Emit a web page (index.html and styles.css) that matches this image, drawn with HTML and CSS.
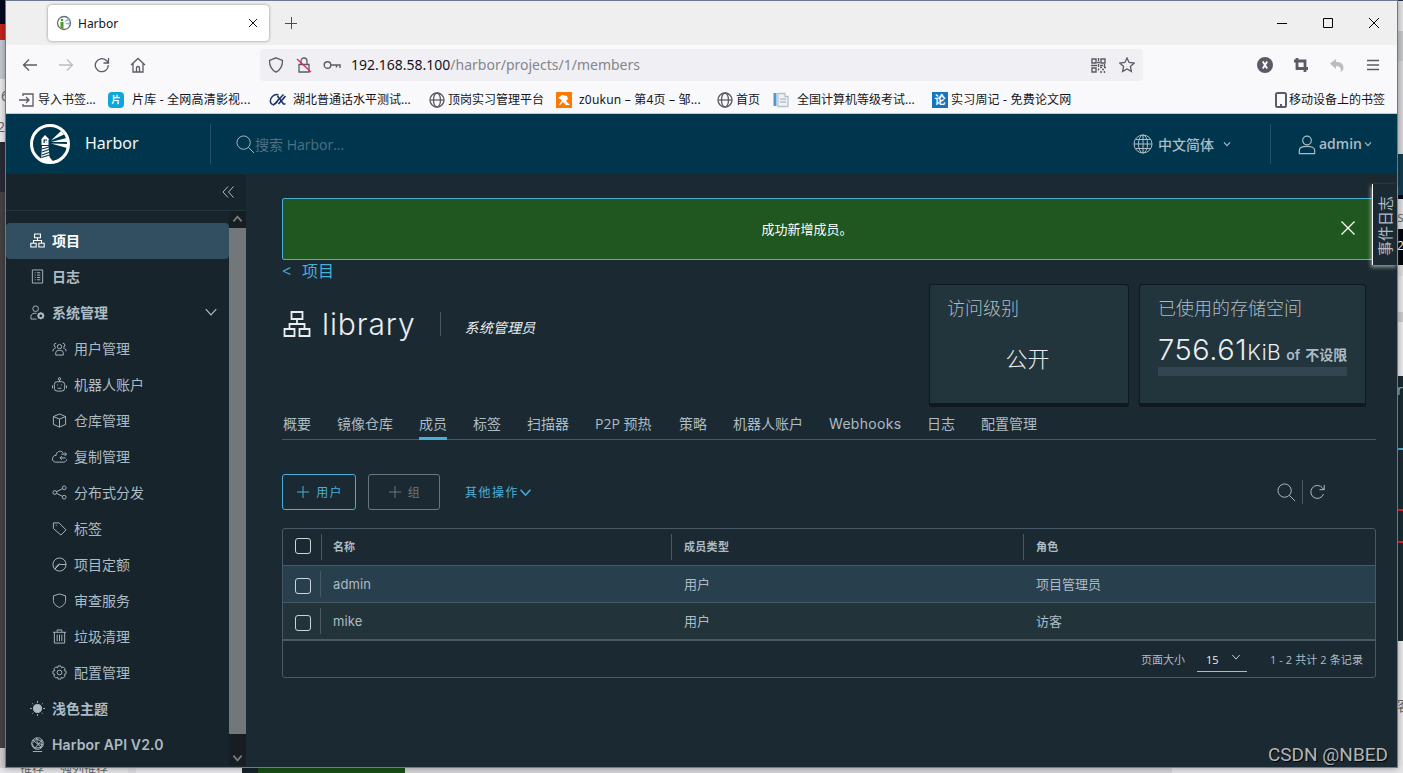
FILE: index.html
```html
<!DOCTYPE html>
<html lang="zh-CN">
<head>
    <meta charset="UTF-8">
    <meta name="viewport" content="width=device-width, initial-scale=1.0">
    <title>Harbor</title>
    <link rel="stylesheet" href="styles.css">
</head>
<body>
    <!-- shared icons -->
    <svg class="defs" aria-hidden="true">
        <symbol id="i-project" viewBox="0 0 28 28"><path d="M8.500 2h11v7h-11zM1.500 19h10v7h-10zM16.500 19h10v7h-10zM14 9v5M6.500 19v-5h15v5"/></symbol>
        <symbol id="i-angle" viewBox="0 0 12 12"><path d="M1.500 3.500L6 8.500l4.500-5"/></symbol>
        <symbol id="i-search" viewBox="0 0 20 20"><circle cx="8" cy="8" r="7"/><path d="M13 13l6 6"/></symbol>
        <symbol id="i-globe" viewBox="0 0 20 20"><circle cx="10" cy="10" r="9"/><ellipse cx="10" cy="10" rx="4.500" ry="9"/><path d="M10 1v18M1 10h18M2.500 5.500h15M2.500 14.500h15"/></symbol>
        <symbol id="i-web" viewBox="0 0 16 16"><circle cx="8" cy="8" r="7"/><ellipse cx="8" cy="8" rx="3.500" ry="7"/><path d="M1 8h14"/></symbol>
    </svg>

    <div class="backdrop">
        <div class="back-left"><span class="bl-six">6</span><span class="bl-two">2</span></div>
        <div class="back-right"><span class="br-s">s</span><span class="br-two">2</span><span class="br-r">r</span><span class="br-guest">客</span></div>
        <div class="back-bottom"><span class="bb-text">推荐</span><span class="bb-text">强列推荐</span></div>
    </div>

    <div class="window">
        <div class="tab-bar">
            <div class="tab">
                <svg class="tab-icon" viewBox="0 0 16 16"><circle cx="8" cy="8" r="6.500" fill="#fff" stroke="#667076" stroke-width="1.300"/><g stroke="none"><path d="M8 7l4-4 1.500 2.500zM8.500 8.500L14 7v3z" fill="#8fbddd"/><path d="M4.500 13V7h3v7z" fill="#4d9a2b"/><circle cx="6" cy="5" r="1.300" fill="#4d9a2b"/></g></svg>
                <span class="tab-title">Harbor</span>
                <svg class="tab-close" viewBox="0 0 8 8"><path d="M0 0l8 8M8 0L0 8"/></svg>
            </div>
            <svg class="new-tab" viewBox="0 0 12 12"><path d="M6 0v12M0 6h12"/></svg>
            <div class="win-buttons">
                <svg viewBox="0 0 10 10"><path d="M0 5.500h10"/></svg>
                <svg viewBox="0 0 10 10"><path d="M.5.5h9v9h-9z"/></svg>
                <svg viewBox="0 0 10 10"><path d="M0 0l10 10M10 0L0 10"/></svg>
            </div>
        </div>

        <div class="toolbar">
            <div class="nav-buttons">
                <svg viewBox="0 0 16 16"><path d="M15 8H1.500M7 2.500L1.500 8 7 13.500"/></svg>
                <svg class="off" viewBox="0 0 16 16"><path d="M1 8h13.500M9 2.500L14.500 8 9 13.500"/></svg>
                <svg viewBox="0 0 16 16"><path d="M14.300 8a6.500 6.500 0 1 1-2-4.500L14 5M14.500 1v5h-5"/></svg>
                <svg viewBox="0 0 16 16"><path d="M1 8l7-6.500L15 8M3 6.500V15h10V6.500M6.500 15v-4a1.500 1.500 0 0 1 3 0v4"/></svg>
            </div>
            <div class="url-bar">
                <svg class="u-shield" viewBox="0 0 16 16"><path d="M8 .8l6.500 2.700c0 6-2 9.500-6.500 11.700C3.500 13 1.500 9.500 1.500 3.500z"/></svg>
                <svg class="u-lock" viewBox="0 0 16 16"><path d="M3 7.500h10V15H3zM5 7.500V4a3 3 0 0 1 6 0v3.500"/><path class="strike" d="M1 2l14 13"/></svg>
                <svg class="u-key" viewBox="0 0 18 10"><circle cx="4.500" cy="5" r="3.300"/><path d="M8 5h9v3M13.500 5v2.500"/></svg>
                <span class="url"><b>192.168.58.100</b>/harbor/projects/1/members</span>
                <svg class="u-qr" viewBox="0 0 15 15"><path d="M1 1h4v4H1zM10 1h4v4h-4zM1 10h4v4H1zM7.500 0v3M6 4.500h3M7.500 6v3M0 7.500h6M9 7.500h3M13.500 6v3M7.500 10.500v2M9 9.500h2M11 11.500h2M9 14h2M13.500 13v2M13 9.500h2"/></svg>
                <svg class="u-star" viewBox="0 0 16 16"><path d="M8 1l2.100 4.500 5 .6-3.700 3.400 1 4.900L8 12l-4.400 2.400 1-4.900L.9 6.100l5-.6z"/></svg>
            </div>
            <div class="tool-buttons">
                <svg viewBox="0 0 16 16"><circle cx="8" cy="8" r="8" fill="#5b5b66" stroke="none"/><path class="thin-white" d="M5.800 4.500l4.400 7M10.200 4.500l-4.400 7"/></svg>
                <svg class="crop" viewBox="0 0 16 16"><path d="M1 4h11v11M4 1v10.500h11"/></svg>
                <svg viewBox="0 0 16 16"><path d="M1 6.500L7 2v3c5 0 7.500 2 7.500 5.500 0 2-1 3.500-3 4.500 1-3.500 0-5.800-4.500-6v3z" fill="#bcbcbf" stroke="none"/></svg>
                <svg viewBox="0 0 16 16"><path d="M2 3.500h12M2 8h12M2 12.500h12"/></svg>
            </div>
        </div>

        <div class="bookmarks">
            <a><svg viewBox="0 0 16 16"><path d="M4 4V2h10v12H4v-2M0 8h10M7 5l3 3-3 3"/></svg>导入书签...</a>
            <a class="wide"><i class="fav fav-cyan">片</i>片库 - 全网高清影视...</a>
            <a><svg class="fav-cx" viewBox="0 0 16 16"><path d="M9 3C5 1 0 6 1 10s6 3 8-3M3.500 13.500L14 2.500"/><path d="M8 4l6 8h2M16 4l-7 8" stroke-width="1.600"/></svg>湖北普通话水平测试...</a>
            <a><svg viewBox="0 0 16 16"><use href="#i-web"/></svg>顶岗实习管理平台</a>
            <a class="wide"><svg class="fav-z" viewBox="0 0 16 16"><path d="M0 0h16v16H0z" fill="#ff7800"/><path d="M2 6l4-3 5 1 1 3-2 2 4 4h-4l-3-3-3 3H3l3-5-2-1z" fill="#fff"/></svg>z0ukun – 第4页 – 邹...</a>
            <a><svg viewBox="0 0 16 16"><use href="#i-web"/></svg>首页</a>
            <a><svg class="fav-doc" viewBox="0 0 16 16"><path d="M.5 1h3v13h-3z" fill="#4e9bd0"/><path d="M5 1.500h7v3h3v10H5zM7 7h6M7 10h6" fill="#eef2f5" stroke="#b5c1ca"/></svg>全国计算机等级考试...</a>
            <a class="wide"><i class="fav fav-blue">论</i>实习周记 - 免费论文网</a>
            <a class="mobile"><svg viewBox="0 0 12 16"><rect x="1" y="1" width="10" height="14" rx="1.500"/><path d="M5 13h2"/></svg>移动设备上的书签</a>
        </div>

        <div class="app-header">
            <svg class="logo" viewBox="0 0 40 40">
                <circle cx="20" cy="20" r="18.500" fill="none" stroke="#fff" stroke-width="3"/>
                <path d="M11 15.500L15 11l4.500 4.500h-1V21h-7v-5.500z" fill="#fff"/><path d="M13.500 15.500h3.500V19h-3.500z" fill="#00364d"/><path d="M14.800 16.500h2V19h-2z" fill="#fff"/>
                <path d="M12 22h6.500l1 11 4 5H11z" fill="#fff"/><path d="M12 25l7-2M12 28l7-2.500M12 31l7-2.500M11.500 33.500l8-2.500" stroke="#00364d" stroke-width="1.200"/>
                <path d="M21 16.500L31 7l3 3.500zM21 18l15.500-4 1 4zM21 19.500l16.500.5-.5 4z" fill="#fff"/>
            </svg>
            <span class="brand">Harbor</span>
            <div class="search">
                <svg viewBox="0 0 20 20"><use href="#i-search"/></svg>
                <span>搜索 Harbor...</span>
            </div>
            <div class="lang">
                <svg class="globe" viewBox="0 0 20 20"><use href="#i-globe"/></svg>
                <span>中文简体</span>
                <svg class="angle" viewBox="0 0 12 12"><use href="#i-angle"/></svg>
            </div>
            <div class="user">
                <svg class="person" viewBox="0 0 20 22"><circle cx="10" cy="6" r="4.800"/><path d="M1.500 20.500v-4c0-2.500 4-4 8.500-4s8.500 1.500 8.500 4v4z"/></svg>
                <span>admin</span>
                <svg class="angle" viewBox="0 0 12 12"><use href="#i-angle"/></svg>
            </div>
        </div>

        <div class="main">
            <div class="sidebar">
                <div class="collapse"><svg viewBox="0 0 12 12"><path d="M6 .5L1 6l5 5.500M11.500.5l-5 5.500 5 5.500"/></svg></div>
                <div class="side-scroll">
                    <ul class="menu">
                        <li class="active"><svg viewBox="0 0 28 28" class="w2"><use href="#i-project"/></svg>项目</li>
                        <li class="top"><svg viewBox="0 0 16 16"><path d="M2.500 1h11v14h-11zM5 4h1M7.500 4H11M5 6.500h1M7.500 6.500H11M5 9h1M7.500 9H11M5 11.500h1M7.500 11.500H11"/></svg>日志</li>
                        <li class="top"><svg viewBox="0 0 16 16"><circle cx="6" cy="4" r="3"/><path d="M7 15H1v-3c0-2 2-3.500 6-3.200"/><circle cx="11.500" cy="11.500" r="2.500" stroke-width="2"/><path d="M11.500 7.500v8M7.500 11.500h8M8.700 8.700l5.600 5.600M14.300 8.700l-5.600 5.600" stroke-dasharray="1.500 5"/></svg>系统管理<svg class="chevron" viewBox="0 0 12 12"><use href="#i-angle"/></svg></li>
                        <li class="sub"><svg viewBox="0 0 16 16"><circle cx="8" cy="6" r="2.300"/><path d="M4 15v-2.500C4 10.500 6 10 8 10s4 .5 4 2.500V15zM4.500 2.500a2 2 0 1 0-.5 4M1 11c0-2 1-3.500 3-3.500M11.500 2.500a2 2 0 1 1 .5 4M15 11c0-2-1-3.500-3-3.500"/></svg>用户管理</li>
                        <li class="sub"><svg viewBox="0 0 16 16"><rect x="2.500" y="5" width="11" height="10" rx="3"/><circle cx="8" cy="2" r="1.300"/><path d="M8 3v2M.5 9v3M15.500 9v3M5.500 8.500h1M9.500 8.500h1M6 12h4"/></svg>机器人账户</li>
                        <li class="sub"><svg viewBox="0 0 16 16"><path d="M8 1l6.500 2.800v8.400L8 15l-6.500-2.800V3.800zM1.500 3.800L8 6.500l6.500-2.700M8 6.500V15"/></svg>仓库管理</li>
                        <li class="sub"><svg viewBox="0 0 16 16"><path d="M12 4.500C10.500 1.500 6 1.500 4.500 5.500c0 0-.2.800 0 1.300C2 6.500.5 8.500.5 10.500S2 14 3.500 14H12c2 0 3.500-1 3.500-3M10 5.500h5.500M13.500 3.500l2 2-2 2M14.500 9.500H8.500M10.500 7.500l-2 2 2 2"/></svg>复制管理</li>
                        <li class="sub"><svg viewBox="0 0 16 16"><circle cx="3" cy="8" r="2"/><circle cx="13" cy="3" r="2"/><circle cx="13" cy="13" r="2"/><path d="M5 7l6-3M5 9l6 3"/></svg>分布式分发</li>
                        <li class="sub"><svg viewBox="0 0 16 16"><path d="M1.500 2h6l7.500 7.500-5.500 5.500L1.500 8zM4 4.500h1"/></svg>标签</li>
                        <li class="sub"><svg viewBox="0 0 16 16"><circle cx="8" cy="8" r="7"/><path d="M3 13l5-5h7M3.500 11L8 7"/></svg>项目定额</li>
                        <li class="sub"><svg viewBox="0 0 16 16"><path d="M8 1l6.500 2v5c0 3.500-3 6-6.500 7.500C4.500 14 1.500 11.500 1.500 8V3z"/></svg>审查服务</li>
                        <li class="sub"><svg viewBox="0 0 16 16"><path d="M1 3.500h14M5.500 3V1h5v2M2.500 3.500V15h11V3.500M5.500 6v7M8 6v7M10.500 6v7"/></svg>垃圾清理</li>
                        <li class="sub"><svg viewBox="0 0 16 16"><circle cx="8" cy="8" r="2.500"/><path d="M6.500 1h3l.5 2 2-.9 2 2L13 6l2 .5v3l-2 .5.900 2-2 2-2-.9-.4 1.900h-3L6 13l-2 .9-2-2L3 10l-2-.5v-3L3 6l-.9-2 2-2L6 3z"/></svg>配置管理</li>
                        <li class="top"><svg viewBox="0 0 16 16"><circle cx="8" cy="8" r="4.300" fill="#adbbc4"/><path d="M8 0v2M8 14v2M0 8h2M14 8h2M2.500 2.500l1 1M12.500 12.500l1 1M13.500 2.500l-1 1M2.500 13.500l1-1"/></svg>浅色主题</li>
                        <li class="top api"><svg viewBox="0 0 16 16"><circle cx="8" cy="7" r="6.200"/><path d="M3 15.500h10M3 3l9 8M13 3L5 12M2 7l5-5 6 3-1 6-7 1zM7 1l1 6 6 1"/></svg>Harbor API V2.0</li>
                    </ul>
                    <div class="scrollbar">
                        <svg viewBox="0 0 12 12" class="up"><use href="#i-angle"/></svg>
                        <div class="thumb"></div>
                        <svg viewBox="0 0 12 12"><use href="#i-angle"/></svg>
                    </div>
                </div>
            </div>

            <div class="content">
                <div class="alert">
                    <span>成功新增成员。</span>
                    <svg viewBox="0 0 14 14"><path d="M.5.5l13 13M13.500.5l-13 13"/></svg>
                </div>
                <div class="event-tab"><span>事件日志</span></div>

                <div class="back-link"><span>&lt;</span>项目</div>
                <div class="summary">
                    <div class="title">
                        <svg viewBox="0 0 28 28"><use href="#i-project"/></svg>
                        <h1>library</h1>
                        <em>系统管理员</em>
                    </div>
                    <div class="card access">
                        <h2>访问级别</h2>
                        <p>公开</p>
                    </div>
                    <div class="card storage">
                        <h2>已使用的存储空间</h2>
                        <p><b>756.61</b><span class="unit">KiB</span><span class="of">of</span><strong>不设限</strong></p>
                        <div class="quota"></div>
                    </div>
                </div>

                <div class="tabs">
                    <a>概要</a><a>镜像仓库</a><a class="current">成员</a><a>标签</a><a>扫描器</a><a class="p2p">P2P 预热</a><a>策略</a><a>机器人账户</a><a class="hooks">Webhooks</a><a>日志</a><a>配置管理</a>
                </div>

                <div class="actions">
                    <button class="btn"><svg viewBox="0 0 12 12"><path d="M6 0v12M0 6h12"/></svg>用户</button>
                    <button class="btn disabled"><svg viewBox="0 0 12 12"><path d="M6 0v12M0 6h12"/></svg>组</button>
                    <span class="more">其他操作<svg viewBox="0 0 12 12"><use href="#i-angle"/></svg></span>
                    <div class="tools">
                        <svg viewBox="0 0 20 20"><use href="#i-search"/></svg>
                        <svg class="refresh" viewBox="0 0 16 16"><path d="M14 10A6.500 6.500 0 1 1 13 4l1.500 1.500M14.700 1v4.700H10"/></svg>
                    </div>
                </div>

                <div class="grid">
                    <div class="row head"><i><s></s></i><span>名称</span><span>成员类型</span><span>角色</span></div>
                    <div class="row hover"><i><s></s></i><span class="latin">admin</span><span>用户</span><span>项目管理员</span></div>
                    <div class="row"><i><s></s></i><span class="latin">mike</span><span>用户</span><span>访客</span></div>
                    <div class="foot">
                        <span>页面大小</span>
                        <span class="size">15<svg viewBox="0 0 12 12"><use href="#i-angle"/></svg></span>
                        <span class="count">1 - 2 共计 2 条记录</span>
                    </div>
                </div>
            </div>
        </div>
    </div>
    <div class="watermark">CSDN @NBED</div>
</body>
</html>
```

FILE: styles.css
```css
* {
    box-sizing: border-box;
}
body {
    margin: 0;
    width: 1403px;
    height: 773px;
    position: relative;
    overflow: hidden;
    font-family: "Open Sans", "Noto Sans CJK SC", sans-serif;
    font-size: 14px;
    color: #adbbc4;
}
svg {
    display: block;
    flex: none;
    fill: none;
    stroke: currentColor;
}
ul, h1, h2, p {
    margin: 0;
    padding: 0;
}
.defs {
    position: absolute;
    width: 0;
    height: 0;
}

/* what is behind the window */
.backdrop {
    position: absolute;
    inset: 0;
    background: #e9e9eb;
    color: #666;
}
.backdrop span {
    position: absolute;
}
.back-left {
    position: absolute;
    left: 0;
    top: 0;
    width: 5px;
    height: 773px;
    overflow: hidden;
    background: linear-gradient(#020a20 0 24px, #c5251f 24px 40px, #c6cad2 40px 79px, #ececef 79px 142px, #292c37 142px 192px, #454244 192px 748px, #cfcfd1 748px 768px, #e9e9eb 768px);
}
.back-left .bl-six {
    top: 86px;
    left: 1px;
}
.back-left .bl-two {
    top: 117px;
    left: -3px;
}
.back-right {
    position: absolute;
    right: 0;
    top: 0;
    width: 6px;
    height: 773px;
    overflow: hidden;
    background: linear-gradient(#2b3040 0 1px, #e5e5e7 1px 31px, #c8c9cc 31px 61px, #d7d7d9 61px 154px, #123c4f 154px 195px, #020712 195px 199px, #dfdfe1 199px 229px, #03060e 229px 265px, #dedede 265px 276px, #e8e8e8 276px 312px, #ccc 312px 322px, #ececee 322px 376px, #1b2a32 376px 448px, #4aaed9 448px 450px, #1b2a32 450px 509px, #e02626 509px 511px, #1b2a32 511px 541px, #e02626 541px 543px, #1b2a32 543px 641px, #e9e9eb 641px);
}
.back-right .br-s {
    top: 207px;
}
.back-right .br-two {
    top: 237px;
    font-size: 12px;
    color: #fff;
}
.back-right .br-r {
    top: 380px;
    color: #adbbc4;
}
.back-right .br-guest {
    top: 695px;
}
.back-bottom {
    position: absolute;
    left: 0;
    bottom: 0;
    width: 1403px;
    height: 5px;
    overflow: hidden;
    display: flex;
    background: linear-gradient(90deg, #e6e6e8 0 128px, #dcdce0 128px 136px, #e9e9eb 136px 242px, #17242b 242px 258px, #174f18 258px 405px, #d5d5d7 405px 1172px, #e6e6e8 1172px);
}
.backdrop .bb-text {
    position: static;
    margin: -8px -4px 0 20px;
    font-size: 12px;
    line-height: 18px;
}

.window {
    position: absolute;
    left: 5px;
    top: 0;
    width: 1393px;
    height: 768px;
    border: 1px solid #6c7a91;
    background: #1b2a32;
    box-shadow: 0 0 7px rgba(0, 0, 0, .35);
    display: flex;
    flex-direction: column;
}

/* browser chrome */
.tab-bar {
    height: 44px;
    background: #efefef;
    display: flex;
    align-items: center;
    color: #15141a;
}
.tab {
    margin-left: 42px;
    width: 221px;
    height: 36px;
    padding: 0 12px 0 8px;
    background: #fff;
    border-radius: 4px;
    box-shadow: 0 0 3px rgba(0, 0, 0, .45);
    display: flex;
    align-items: center;
}
.tab-icon {
    width: 16px;
    height: 16px;
}
.tab-title {
    flex: 1;
    margin-left: 6px;
    font-family: "Noto Sans", sans-serif;
    font-size: 12px;
}
.tab-close {
    width: 8px;
    height: 8px;
    overflow: visible;
}
.new-tab {
    width: 12px;
    height: 12px;
    margin-left: 16px;
    color: #4b4b55;
    shape-rendering: crispEdges;
}
.win-buttons {
    margin-left: auto;
    margin-right: 18px;
    display: flex;
    gap: 36px;
    color: #000;
}
.win-buttons svg {
    width: 10px;
    height: 10px;
}
.toolbar {
    height: 40px;
    background: #f9f9fb;
    display: flex;
    align-items: center;
    color: #5b5b66;
}
.nav-buttons {
    width: 254px;
    padding-left: 16px;
    display: flex;
    gap: 20px;
}
.nav-buttons svg, .tool-buttons svg, .u-shield, .u-lock, .u-star {
    width: 16px;
    height: 16px;
    stroke-width: 1.3;
}
.nav-buttons .off {
    color: #bcbcbf;
}
.url-bar {
    width: 883px;
    height: 32px;
    padding: 0 8px;
    border-radius: 4px;
    background: #f0f0f4;
    display: flex;
    align-items: center;
}
.u-lock {
    margin-left: 12px;
}
.strike {
    stroke: #e22850;
}
.u-key {
    width: 18px;
    height: 10px;
    margin-left: 11px;
    stroke-width: 1.4;
}
.url {
    flex: 1;
    margin-left: 10px;
    padding-bottom: 1px;
    font-family: "Noto Sans", sans-serif;
    font-size: 14px;
    color: #85858c;
}
.url b {
    font-weight: normal;
    color: #15141a;
}
.u-qr {
    width: 15px;
    height: 15px;
    stroke-width: 1.4;
}
.u-star {
    margin-left: 13px;
}
.tool-buttons {
    margin-left: auto;
    margin-right: 16px;
    display: flex;
    gap: 20px;
}
.thin-white {
    stroke: #fff;
    stroke-width: 1.8;
}
.tool-buttons .crop {
    stroke-width: 2.8;
}
.bookmarks {
    height: 29px;
    padding-left: 13px;
    padding-right: 12px;
    background: #f9f9fb;
    border-bottom: 1px solid #c6c9cc;
    display: grid;
    grid-template-columns: 89px 161px 160px 127px 161px 56px 159px 200px 1fr;
    font-family: "Noto Sans", "Noto Sans CJK SC", sans-serif;
    font-size: 12px;
    line-height: 28px;
    color: #15141a;
}
.bookmarks a {
    padding-top: 1px;
    display: flex;
    align-items: center;
    white-space: nowrap;
}
.bookmarks .wide {
    letter-spacing: .2px;
}
.bookmarks svg {
    width: 16px;
    height: 16px;
    margin-right: 3px;
    color: #5b5b66;
    stroke-width: 1.3;
}
.bookmarks .fav-cx {
    width: 17px;
    margin-right: 7px;
    color: #1b3566;
    stroke-width: 1.5;
}
.bookmarks .fav-z {
    margin-right: 7px;
    stroke: none;
}
.bookmarks .fav-doc {
    margin-right: 8px;
    stroke: none;
}
.fav {
    width: 16px;
    height: 16px;
    margin-right: 8px;
    line-height: 15px;
    text-align: center;
    font-style: normal;
    font-weight: bold;
    font-size: 11px;
    color: #fff;
}
.fav-cyan {
    background: #0ea5dc;
    border-radius: 4px;
    font-size: 9px;
}
.fav-blue {
    margin-right: 3px;
    background: #1674c1;
}
.bookmarks .mobile {
    padding-top: 0;
    justify-content: flex-end;
}
.bookmarks .mobile svg {
    width: 12px;
    margin-right: 2px;
    stroke-width: 2;
}

/* harbor header */
.app-header {
    height: 60px;
    background: #00364d;
    display: flex;
    align-items: center;
}
.logo {
    width: 40px;
    height: 40px;
    margin-left: 24px;
    stroke: none;
}
.brand {
    width: 125px;
    margin-left: 15px;
    padding-bottom: 2px;
    font-family: "Noto Sans", sans-serif;
    font-size: 16px;
    color: #f4f6f7;
}
.search {
    flex: 1;
    height: 40px;
    padding-left: 25px;
    border-left: 1px solid #22506a;
    display: flex;
    align-items: center;
}
.search svg {
    width: 19px;
    height: 19px;
}
.search span {
    color: #4d7082;
}
.lang {
    width: 138px;
    height: 40px;
    border-right: 1px solid #22506a;
    display: flex;
    align-items: center;
    font-weight: 500;
}
.lang span, .user span {
    padding-bottom: 1px;
}
.globe {
    width: 20px;
    height: 20px;
    margin-right: 5px;
}
.angle {
    width: 8px;
    height: 8px;
    stroke-width: 1.6;
}
.lang .angle {
    margin-left: 9px;
}
.user {
    width: 126px;
    padding-left: 27px;
    display: flex;
    align-items: center;
    font-weight: 600;
}
.person {
    width: 18px;
    height: 20px;
    margin-right: 3px;
    margin-top: 2px;
    stroke-width: 1.3;
}
.user .angle {
    margin-left: 2px;
}

.main {
    flex: 1;
    display: flex;
}
.sidebar {
    width: 240px;
    height: 592px;
    background: #17242b;
    overflow: hidden;
}
.collapse {
    height: 37px;
    padding: 12px 12px 0 0;
    border-bottom: 1px solid #22343c;
}
.collapse svg {
    width: 12px;
    height: 12px;
    margin-left: auto;
}
.side-scroll {
    height: 555px;
    display: flex;
}
.menu {
    width: 223px;
    padding-top: 12px;
    list-style: none;
}
.menu li {
    height: 36px;
    padding-left: 24px;
    padding-bottom: 2px;
    display: flex;
    align-items: center;
    font-weight: 500;
}
.menu li > svg:first-child {
    width: 15px;
    height: 15px;
    margin-right: 7px;
    margin-top: 1px;
}
.menu .w2 {
    stroke-width: 2;
}
.menu .top {
    font-weight: 600;
}
.menu .active {
    background: #324f62;
    border-radius: 4px;
    color: #fff;
    font-weight: bold;
}
.menu .sub {
    padding-left: 46px;
    font-weight: normal;
}
.menu .api {
    font-family: Inter, sans-serif;
    letter-spacing: .15px;
}
.menu .chevron {
    width: 14px;
    height: 14px;
    margin-left: auto;
    margin-right: 11px;
}
.scrollbar {
    width: 17px;
    background: #171d23;
    display: flex;
    flex-direction: column;
    align-items: center;
    padding: 2px 0;
    color: #757b7e;
}
.scrollbar svg {
    width: 11px;
    height: 12px;
    stroke-width: 2;
}
.scrollbar .up {
    transform: rotate(180deg);
}
.thumb {
    width: 17px;
    height: 506px;
    margin-top: 3px;
    margin-bottom: auto;
    background: #727779;
}

.content {
    width: 1151px;
    height: 592px;
    padding: 24px 21px 0 36px;
    position: relative;
}
.alert {
    height: 62px;
    padding-right: 20px;
    padding-bottom: 2px;
    border: 1px solid #4aaed9;
    border-radius: 2px;
    background: #20561f;
    display: flex;
    align-items: center;
    color: #fff;
    font-size: 13px;
}
.alert span {
    flex: 1;
    text-align: center;
}
.alert svg {
    width: 14px;
    height: 14px;
    margin-left: 10px;
    stroke-width: 1.3;
}
.event-tab {
    position: absolute;
    right: 0;
    top: 10px;
    width: 25px;
    height: 81px;
    padding-top: 4px;
    background: #1b2a32;
    border-left: 1px solid #fff;
    box-shadow: -1px 2px 4px rgba(255, 255, 255, .55);
    display: flex;
    align-items: center;
    justify-content: center;
}
.event-tab span {
    writing-mode: vertical-rl;
    text-orientation: sideways;
    transform: rotate(180deg);
    font-size: 15px;
    line-height: 18px;
}
.back-link {
    height: 24px;
    font-size: 16px;
    line-height: 23px;
    color: #4aaed9;
}
.back-link span {
    display: inline-block;
    width: 20px;
}
.summary {
    height: 122px;
    display: flex;
}
.title {
    width: 647px;
    height: 80px;
    display: flex;
    align-items: center;
    color: #eaedf0;
}
.title svg {
    width: 28px;
    height: 28px;
    margin-left: 1px;
    stroke-width: 1.8;
}
.title h1 {
    margin-left: 11px;
    padding-bottom: 1px;
    font-family: Inter, sans-serif;
    font-size: 30px;
    font-weight: 300;
    line-height: 40px;
    letter-spacing: .9px;
}
.title em {
    height: 24px;
    margin-left: 24px;
    padding-left: 24px;
    padding-top: 4px;
    border-left: 1px solid #495965;
    line-height: 24px;
    letter-spacing: .2px;
}
.card {
    width: 200px;
    height: 123px;
    padding: 12px 17px;
    border: 1px solid #10171d;
    border-bottom-width: 4px;
    border-radius: 3px;
    background: #22343c;
}
.card h2 {
    font-size: 18px;
    line-height: 23px;
    font-weight: 300;
}
.access p {
    margin-top: 23px;
    padding-right: 3px;
    font-size: 22px;
    line-height: 30px;
    font-weight: 300;
    text-align: center;
    color: #eaedf0;
}
.storage {
    width: 227px;
    margin-left: 10px;
    padding-left: 18px;
}
.storage p {
    height: 34px;
    margin-top: 13px;
    display: flex;
    align-items: baseline;
    white-space: nowrap;
    line-height: 34px;
    color: #eaedf0;
    font-family: Inter, "Noto Sans CJK SC", sans-serif;
}
.storage p b {
    font-size: 29px;
    font-weight: 300;
    letter-spacing: .55px;
}
.storage .unit {
    font-size: 21px;
    font-weight: 300;
    letter-spacing: .5px;
}
.storage .of, .storage strong {
    color: #adbbc4;
    font-weight: 600;
}
.storage .of {
    margin: 0 5px;
}
.quota {
    width: 189px;
    height: 9px;
    background: #324550;
}
.tabs {
    height: 34px;
    padding-left: 1px;
    border-bottom: 1px solid #495965;
    display: flex;
    gap: 26px;
    line-height: 35px;
}
.tabs a {
    height: 34px;
    white-space: nowrap;
}
.tabs .current {
    border-bottom: 3px solid #4aaed9;
}
.tabs .p2p {
    width: 58px;
}
.tabs .hooks {
    width: 72px;
    font-family: Inter, sans-serif;
    letter-spacing: .3px;
}
.actions {
    margin-top: 34px;
    height: 36px;
    display: flex;
    align-items: center;
    color: #4aaed9;
    font-size: 12px;
}
.btn {
    width: 74px;
    height: 36px;
    margin-right: 12px;
    padding: 0 0 0 2px;
    border: 1px solid #4aaed9;
    border-radius: 3px;
    background: none;
    display: flex;
    align-items: center;
    justify-content: center;
    gap: 7px;
    color: #4aaed9;
    font: inherit;
    letter-spacing: 1.3px;
}
.btn svg {
    width: 12px;
    height: 12px;
}
.disabled {
    width: 72px;
    border-color: #6c757a;
    color: #6c757a;
}
.more {
    margin-left: 13px;
    display: flex;
    align-items: center;
    letter-spacing: 1.5px;
}
.more svg {
    width: 13px;
    height: 13px;
    stroke-width: 1.4;
}
.tools {
    margin-left: auto;
    margin-right: 50px;
    display: flex;
    align-items: center;
    color: #adbbc4;
}
.tools svg {
    width: 19px;
    height: 19px;
}
.tools .refresh {
    width: 24px;
    height: 24px;
    margin-left: 6px;
    padding: 4px 0 4px 6px;
    border-left: 1px solid #495965;
}
.grid {
    margin-top: 18px;
    height: 150px;
    border: 1px solid #495965;
    border-radius: 3px;
    font-size: 13px;
}
.row {
    height: 37px;
    border-bottom: 1px solid #495965;
    background: #22343a;
    display: grid;
    grid-template-columns: 38px 351px 352px 1fr;
    align-items: center;
    line-height: 36px;
}
.row i {
    height: 26px;
    padding-top: 7px;
    padding-left: 12px;
    border-right: 1px solid #495965;
}
.row s {
    display: block;
    width: 16px;
    height: 16px;
    border: 1px solid #cbd4d8;
    border-radius: 3px;
}
.row span {
    padding-left: 12px;
}
.head {
    background: none;
    font-size: 11px;
    font-weight: bold;
}
.head i {
    width: 39px;
    padding-top: 4px;
}
.head span:nth-child(n+3) {
    height: 26px;
    line-height: 26px;
    border-left: 1px solid #495965;
    margin-left: -1px;
    letter-spacing: .3px;
}
.hover {
    background: #283f4d;
}
.row .latin {
    font-family: Inter, sans-serif;
    letter-spacing: .1px;
}
.row:nth-child(3) {
    height: 38px;
    border-bottom-width: 2px;
}
.foot {
    height: 36px;
    padding-right: 12px;
    padding-bottom: 1px;
    display: flex;
    align-items: center;
    justify-content: flex-end;
    font-size: 11px;
}
.size {
    width: 50px;
    height: 25px;
    margin: 2px 23px 0 12px;
    padding: 0 6px 0 9px;
    border-bottom: 1px solid #adbbc4;
    display: flex;
    align-items: center;
    justify-content: space-between;
    color: #eaedf0;
}
.count {
    letter-spacing: .1px;
}
.size svg {
    width: 10px;
    height: 10px;
    margin-top: -4px;
}
.watermark {
    position: absolute;
    right: 15px;
    bottom: 5px;
    font-family: Roboto, sans-serif;
    font-size: 19px;
    line-height: 26px;
    color: #b2b5b7;
    text-shadow: 1px 1px 1px #000;
}
```
